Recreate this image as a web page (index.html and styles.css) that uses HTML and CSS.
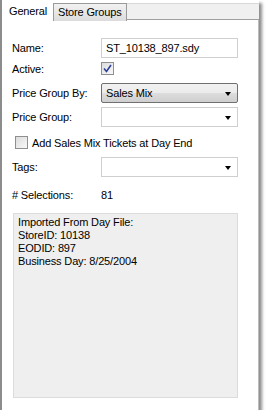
FILE: index.html
```html
<!DOCTYPE html>
<html>
<head>
<meta charset="utf-8">
<link rel="stylesheet" href="styles.css">
</head>
<body>
<div class="frame">
  <div class="tabs">
    <div class="tab active">General</div>
    <div class="tab">Store Groups</div>
    <div class="tab-fill"></div>
  </div>
  <div class="content">
    <div class="row r-name">
      <span class="label">Name:</span>
      <div class="field text">ST_10138_897.sdy</div>
    </div>
    <div class="row r-active">
      <span class="label">Active:</span>
      <span class="check checked">
        <svg width="9" height="9" viewBox="0 0 9 9"><path d="M1 4.5 L3.5 7.5 L8 1" fill="none" stroke="#2b3f9a" stroke-width="1.6"/></svg>
      </span>
    </div>
    <div class="row r-pgb">
      <span class="label">Price Group By:</span>
      <div class="field select btn">Sales Mix<span class="arrow"></span></div>
    </div>
    <div class="row r-pg">
      <span class="label">Price Group:</span>
      <div class="field select"><span class="arrow"></span></div>
    </div>
    <div class="row r-add">
      <span class="check"></span>
      <span class="cb-label">Add Sales Mix Tickets at Day End</span>
    </div>
    <div class="row r-tags">
      <span class="label">Tags:</span>
      <div class="field select"><span class="arrow"></span></div>
    </div>
    <div class="row r-sel">
      <span class="label">&#35; Selections:</span>
      <span class="value">81</span>
    </div>
    <div class="memo">Imported From Day File:<br>StoreID: 10138<br>EODID: 897<br>Business Day: 8/25/2004</div>
  </div>
</div>
</body>
</html>
```
FILE: styles.css
```css
html, body { margin: 0; padding: 0; background: #fff; }
body {
  font-family: "Liberation Sans", Arial, sans-serif;
  font-size: 11px;
  letter-spacing: -0.15px;
  color: #000;
}
.frame {
  width: 259px;
  height: 410px;
  border-left: 2px solid #8c8c8c;
  box-sizing: border-box;
  box-shadow: 3px 3px 3px rgba(0,0,0,0.45);
  display: flex;
  flex-direction: column;
  background: #fff;
}
.tabs {
  display: flex;
  height: 20px;
  padding-top: 2px;
  box-sizing: border-box;
  flex: none;
}
.tab {
  height: 18px;
  padding: 0 4px;
  line-height: 17px;
  border: 1px solid #9a9a9a;
  border-bottom: none;
  background: linear-gradient(#f2f2f2, #dcdcdc);
  box-sizing: border-box;
  margin-top: 1px;
}
.tab.active {
  background: #fff;
  height: 19px;
  margin-top: 0;
  width: 51px;
  padding-left: 6px;
  border-color: #fff;
}
.tab-fill {
  flex: 1;
  background: #f0f0f0;
  border-bottom: 1px solid #a0a0a0;
  border-top: 1px solid #d8d8d8;
  margin-top: 1px;
}
.content {
  flex: 1;
  display: flex;
  flex-direction: column;
  padding: 18px 20px 12px 10px;
  border-right: 1px solid #bcbcbc;
}
.row {
  display: flex;
  align-items: center;
  height: 20px;
  flex: none;
}
.label { width: 89px; flex: none; }
.field {
  flex: 1;
  height: 20px;
  box-sizing: border-box;
  border: 1px solid #cfcfcf;
  background: #fff;
  display: flex;
  align-items: center;
  padding-left: 4px;
  position: relative;
}
.field.btn {
  border: 1px solid #707070;
  border-radius: 2px;
  background: linear-gradient(#f2f2f2 0%, #ebebeb 50%, #dddddd 51%, #cfcfcf 100%);
}
.arrow {
  position: absolute;
  right: 6px;
  top: 8px;
  width: 0; height: 0;
  border-left: 3.5px solid transparent;
  border-right: 3.5px solid transparent;
  border-top: 4px solid #000;
}
.r-active { margin-top: 4px; height: 13px; }
.r-pgb { margin-top: 8px; }
.r-pg { margin-top: 4px; }
.r-add { margin-top: 9px; height: 13px; }
.r-tags { margin-top: 8px; }
.r-sel { margin-top: 8px; }
.check {
  width: 13px; height: 13px;
  box-sizing: border-box;
  border: 1px solid #8e8f8f;
  background: linear-gradient(135deg, #dcdcdc, #f8f8f8);
  display: flex; align-items: center; justify-content: center;
  flex: none;
}
.r-add .check { margin-left: 3px; margin-right: 4px; }
.memo {
  margin-top: 8px;
  flex: 1;
  background: #efefef;
  border: 1px solid #dcdcdc;
  padding: 2px 4px;
  line-height: 13px;
  margin-left: 1px;
}
```
